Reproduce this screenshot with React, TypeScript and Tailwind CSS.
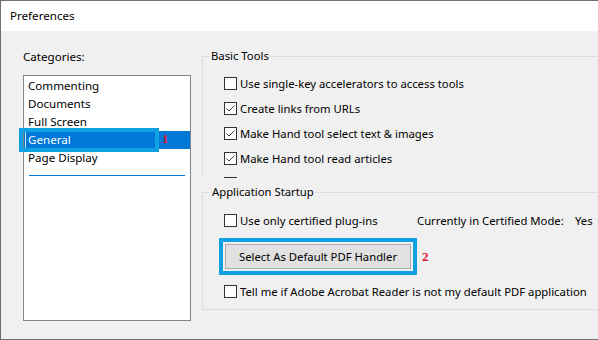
import React from "react";

const FONT = "font-['Noto_Sans','Liberation_Sans',sans-serif]";

function Check({ checked }: { checked?: boolean }) {
  return (
    <span className="flex h-[13px] w-[13px] shrink-0 items-center justify-center border border-[#333] bg-white">
      {checked && (
        <svg width="11" height="11" viewBox="0 0 11 11" fill="none">
          <polyline points="1.5,5.5 4,8 9.5,2.5" stroke="#444" strokeWidth="1" />
        </svg>
      )}
    </span>
  );
}

function CheckRow({ label, checked }: { label?: string; checked?: boolean }) {
  return (
    <div className="flex h-[25px] items-center">
      <Check checked={checked} />
      {label && <span className="ml-[3px] whitespace-nowrap">{label}</span>}
    </div>
  );
}

const CATEGORIES = ["Commenting", "Documents", "Full Screen", "General", "Page Display"];

export default function App() {
  return (
    <div
      className={`flex h-[340px] w-[598px] flex-col overflow-hidden border-y border-l border-[#6f6f6f] bg-[#f0f0f0] text-[11.3px] leading-[16px] text-black ${FONT}`}
    >
      {/* title bar */}
      <div className="flex h-[30px] shrink-0 items-center bg-white pl-[9px] text-[11.6px]">Preferences</div>

      <div className="flex flex-1">
        {/* categories */}
        <div className="shrink-0 pl-[22px] pt-[18px]">
          <div className="text-[11.6px]">Categories:</div>
          <div className="relative mt-[10px] h-[246px] w-[168px] border border-[#828790] bg-white pt-px text-[11.6px]">
            {CATEGORIES.map((c) =>
              c === "General" ? (
                <div key={c} className="relative flex h-[18px] items-center bg-[#0078d7] pl-[4px] text-white">
                  <span className="absolute inset-y-0 left-px w-px bg-white/80" />
                  {c}
                  <span className="absolute left-[138px] top-0 font-['Liberation_Serif',serif] text-[13px] font-bold text-[#e3163a]">
                    1
                  </span>
                </div>
              ) : (
                <div key={c} className="flex h-[18px] items-center pl-[4px]">
                  {c}
                </div>
              )
            )}
            <div className="ml-[5px] mt-[8px] h-px w-[156px] bg-[#0078d7]" />
            <div className="absolute left-[-5px] top-[52px] h-[24px] w-[140px] border-4 border-[#0ea0e3]" />
          </div>
        </div>

        {/* options */}
        <div className="ml-[11px] w-[440px] shrink-0 pt-[17px]">
          {/* scrolled area, cut off at the next checkbox */}
          <div className="h-[130px] overflow-hidden">
            <fieldset className="border border-[#dcdcdc] pb-[10px] pl-[21px] pt-[7px]">
              <legend className="-ml-[14px] px-px">Basic Tools</legend>
              <CheckRow label="Use single-key accelerators to access tools" />
              <CheckRow label="Create links from URLs" checked />
              <CheckRow label="Make Hand tool select text & images" checked />
              <CheckRow label="Make Hand tool read articles" checked />
              <CheckRow />
            </fieldset>
          </div>

          <fieldset className="mt-[6px] border border-[#dcdcdc] pb-[5px] pl-[21px] pt-[8px]">
            <legend className="-ml-[13px] px-px">Application Startup</legend>
            <div className="flex h-[25px] items-center whitespace-nowrap">
              <div className="flex w-[193px] items-center">
                <Check />
                <span className="ml-[3px]">Use only certified plug-ins</span>
              </div>
              <span className="w-[158px]">Currently in Certified Mode:</span>
              <span>Yes</span>
            </div>
            <div className="mt-[5px] flex items-center">
              <div className="-ml-[5px] h-[37px] w-[198px] border-4 border-[#0ea0e3] p-[2px]">
                <div className="flex h-full w-full items-center justify-center border border-[#adadad] bg-[#e1e1e1]">
                  Select As Default PDF Handler
                </div>
              </div>
              <span className="ml-[5px] font-['Liberation_Serif',serif] text-[13px] font-bold text-[#e3163a]">2</span>
            </div>
            <div className="mt-[4px]">
              <CheckRow label="Tell me if Adobe Acrobat Reader is not my default PDF application" />
            </div>
          </fieldset>
        </div>
      </div>
    </div>
  );
}
